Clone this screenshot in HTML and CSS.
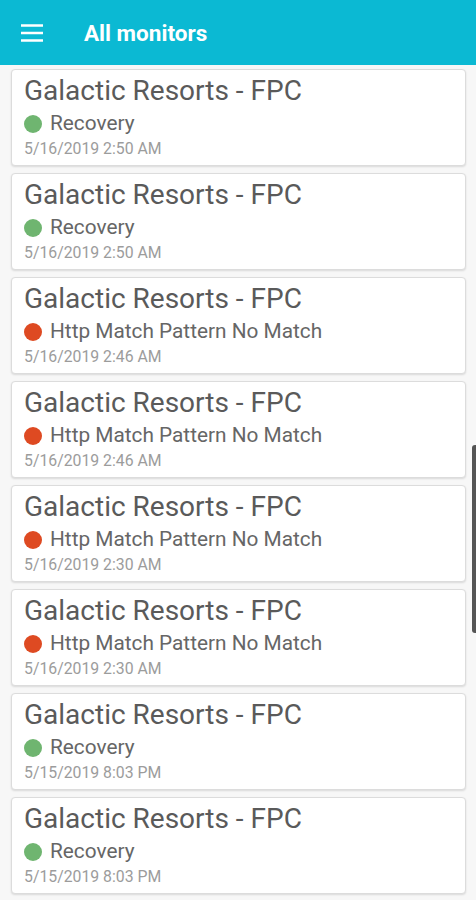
FILE: index.html
```html
<!DOCTYPE html>
<html>
<head>
<meta charset="utf-8">
<link rel="stylesheet" href="styles.css">
</head>
<body>
<header class="appbar">
  <svg class="menu" width="24" height="24" viewBox="0 0 24 24"><path d="M1 4.5h22M1 12h22M1 19.5h22" stroke="#fff" stroke-width="2.6" fill="none"/></svg>
  <h1 class="title">All monitors</h1>
</header>
<main class="list">
  <div class="card"><div class="name">Galactic Resorts - FPC</div><div class="status"><span class="dot ok"></span>Recovery</div><div class="date">5/16/2019 2:50 AM</div></div>
  <div class="card"><div class="name">Galactic Resorts - FPC</div><div class="status"><span class="dot ok"></span>Recovery</div><div class="date">5/16/2019 2:50 AM</div></div>
  <div class="card"><div class="name">Galactic Resorts - FPC</div><div class="status"><span class="dot err"></span>Http Match Pattern No Match</div><div class="date">5/16/2019 2:46 AM</div></div>
  <div class="card"><div class="name">Galactic Resorts - FPC</div><div class="status"><span class="dot err"></span>Http Match Pattern No Match</div><div class="date">5/16/2019 2:46 AM</div></div>
  <div class="card"><div class="name">Galactic Resorts - FPC</div><div class="status"><span class="dot err"></span>Http Match Pattern No Match</div><div class="date">5/16/2019 2:30 AM</div></div>
  <div class="card"><div class="name">Galactic Resorts - FPC</div><div class="status"><span class="dot err"></span>Http Match Pattern No Match</div><div class="date">5/16/2019 2:30 AM</div></div>
  <div class="card"><div class="name">Galactic Resorts - FPC</div><div class="status"><span class="dot ok"></span>Recovery</div><div class="date">5/15/2019 8:03 PM</div></div>
  <div class="card"><div class="name">Galactic Resorts - FPC</div><div class="status"><span class="dot ok"></span>Recovery</div><div class="date">5/15/2019 8:03 PM</div></div>
</main>
<div class="scrollbar"></div>
</body>
</html>
```
FILE: styles.css
```css
html, body {
  margin: 0;
  padding: 0;
}
body {
  width: 476px;
  height: 900px;
  overflow: hidden;
  background: #f7f7f7;
  font-family: Roboto, "Liberation Sans", sans-serif;
  position: relative;
}
.appbar {
  height: 65px;
  background: #0bb9d3;
  display: flex;
  align-items: center;
  padding: 0 0 0 20px;
  box-sizing: border-box;
}
.menu {
  display: block;
}
.title {
  margin: 0 0 0 40px;
  color: #fff;
  font-size: 22.5px;
  font-weight: 700;
  letter-spacing: 0;
}
.list {
  display: flex;
  flex-direction: column;
  gap: 7px;
  padding: 4px 10px 0 11px;
}
.card {
  background: #fff;
  border: 1px solid #dcdcdc;
  border-radius: 4px;
  box-shadow: 0 1px 2px rgba(0,0,0,0.12);
  height: 97px;
  flex: none;
  box-sizing: border-box;
  padding: 4px 0 0 12px;
}
.name {
  font-size: 28px;
  line-height: 34px;
  color: #5a5a5a;
}
.status {
  display: flex;
  align-items: center;
  font-size: 20.8px;
  line-height: 31px;
  color: #666;
}
.dot {
  flex: none;
  width: 18px;
  height: 18px;
  border-radius: 50%;
  margin-right: 8px;
}
.dot.ok { background: #6fb570; }
.dot.err { background: #de4a22; }
.date {
  font-size: 15.8px;
  line-height: 20px;
  color: #9c9c9c;
}
.scrollbar {
  position: absolute;
  right: 0;
  top: 445px;
  width: 4px;
  height: 188px;
  background: #555;
  border-radius: 3px 0 0 3px;
}
```
